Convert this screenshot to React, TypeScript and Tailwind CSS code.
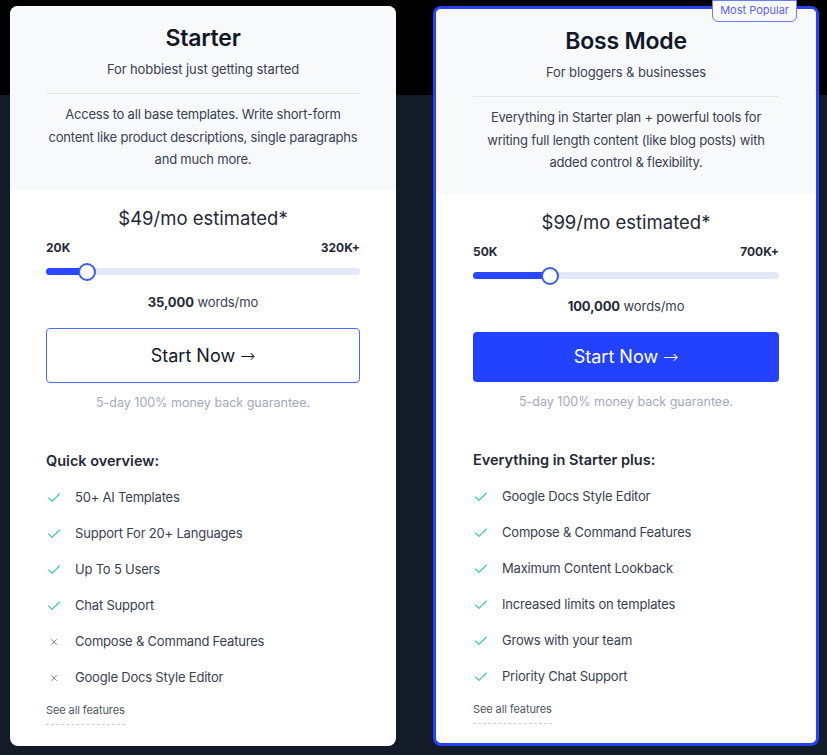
import { Check, X } from 'lucide-react';

interface Feature {
  label: string;
  included: boolean;
}

interface Plan {
  name: string;
  tagline: string;
  description: string;
  price: string;
  min: string;
  max: string;
  words: string;
  thumb: number;
  featuresTitle: string;
  features: Feature[];
  popular?: boolean;
}

const plans: Plan[] = [
  {
    name: 'Starter',
    tagline: 'For hobbiest just getting started',
    description:
      'Access to all base templates. Write short-form content like product descriptions, single paragraphs and much more.',
    price: '$49/mo estimated*',
    min: '20K',
    max: '320K+',
    words: '35,000',
    thumb: 41,
    featuresTitle: 'Quick overview:',
    features: [
      { label: '50+ AI Templates', included: true },
      { label: 'Support For 20+ Languages', included: true },
      { label: 'Up To 5 Users', included: true },
      { label: 'Chat Support', included: true },
      { label: 'Compose & Command Features', included: false },
      { label: 'Google Docs Style Editor', included: false },
    ],
  },
  {
    name: 'Boss Mode',
    tagline: 'For bloggers & businesses',
    description:
      'Everything in Starter plan + powerful tools for writing full length content (like blog posts) with added control & flexibility.',
    price: '$99/mo estimated*',
    min: '50K',
    max: '700K+',
    words: '100,000',
    thumb: 77,
    featuresTitle: 'Everything in Starter plus:',
    features: [
      { label: 'Google Docs Style Editor', included: true },
      { label: 'Compose & Command Features', included: true },
      { label: 'Maximum Content Lookback', included: true },
      { label: 'Increased limits on templates', included: true },
      { label: 'Grows with your team', included: true },
      { label: 'Priority Chat Support', included: true },
    ],
    popular: true,
  },
];

function WordSlider({ plan }: { plan: Plan }) {
  return (
    <div>
      <div className="flex justify-between text-[12px] leading-4 font-bold text-[#1f2937]">
        <span>{plan.min}</span>
        <span>{plan.max}</span>
      </div>
      <div className="relative h-[18px] mt-[7px] flex items-center">
        <div className="w-full h-[7px] rounded-full bg-[#e2e8f8]" />
        <div
          className="absolute left-0 h-[7px] rounded-full bg-[#2a48ff]"
          style={{ width: plan.thumb }}
        />
        <div
          className="absolute w-[18px] h-[18px] rounded-full bg-white border-2 border-[#3b5bff] -translate-x-1/2"
          style={{ left: plan.thumb }}
        />
      </div>
      <p className="mt-[11px] text-center text-[13px] leading-5 tracking-[-0.1px] text-[#374151]">
        <span className="font-bold text-[#1f2937]">{plan.words}</span> words/mo
      </p>
    </div>
  );
}

function PlanCard({ plan }: { plan: Plan }) {
  const popular = !!plan.popular;
  return (
    <div
      className={
        popular
          ? 'relative w-[386px] h-[740px] rounded-lg bg-white border-[3px] border-[#2642ff] flex flex-col'
          : 'relative w-[386px] h-[740px] rounded-lg bg-white flex flex-col'
      }
    >
      {popular && (
        <div className="absolute -top-[9px] right-[19px] px-[7px] h-[22px] flex items-end pb-[3px] rounded-b-md border border-[#6b7bff] bg-[#f8f9fb] text-[11px] leading-4 text-[#5f5ff0]">
          Most Popular
        </div>
      )}
      <div
        className={
          popular
            ? 'bg-[#f8f9fb] rounded-t-[5px] pt-[16px] pb-[20px] px-[37px] text-center'
            : 'bg-[#f8f9fb] rounded-t-lg pt-[16px] pb-[19px] px-[36px] text-center'
        }
      >
        <h2 className="text-[23px] leading-8 font-semibold tracking-[-0.2px] text-[#111827]">
          {plan.name}
        </h2>
        <p className="mt-[5px] text-[13px] leading-5 tracking-[-0.1px] text-[#374151]">
          {plan.tagline}
        </p>
        <div className="mt-[14px] h-px bg-[#e1e4ec]" />
        <p className="mt-[9px] text-[13px] leading-[22.5px] tracking-[-0.2px] text-[#374151]">
          {plan.description}
        </p>
      </div>
      <div className={popular ? 'px-[37px] pt-[14px]' : 'px-[36px] pt-[14px]'}>
        <p className="text-center text-[18.5px] leading-7 text-[#1f2937]">{plan.price}</p>
        <div className="mt-[8px]">
          <WordSlider plan={plan} />
        </div>
        <button
          className={
            popular
              ? 'mt-[16px] w-full h-[50px] rounded bg-[#2342ff] text-white text-[18px]'
              : 'mt-[16px] w-full h-[55px] rounded border border-[#4c6bff] bg-white text-[#111827] text-[18px]'
          }
        >
          Start Now <span className="font-['DejaVu_Sans'] font-light">→</span>
        </button>
        <p className="mt-[11px] text-center text-[12.5px] leading-[18px] text-[#a3aac0]">
          5-day 100% money back guarantee.
        </p>
        <h3 className="mt-[38px] text-[14.5px] leading-[22px] font-semibold text-[#1f2937]">
          {plan.featuresTitle}
        </h3>
        <ul className="mt-[16px] flex flex-col gap-4">
          {plan.features.map((f) => (
            <li
              key={f.label}
              className="flex items-center h-5 text-[13px] tracking-[-0.2px] text-[#374151]"
            >
              <span className="w-[29px] flex items-center">
                {f.included ? (
                  <Check className="w-[16px] h-[16px] text-[#34d399]" strokeWidth={1.75} />
                ) : (
                  <X className="w-[10px] h-[10px] ml-[3px] text-[#7c84a8]" strokeWidth={2.25} />
                )}
              </span>
              {f.label}
            </li>
          ))}
        </ul>
        <a className="mt-[14px] inline-block pb-[6px] border-b border-dashed border-[#c9cdd8] text-[11px] leading-4 tracking-[-0.1px] text-[#4b5563]">
          See all features
        </a>
      </div>
    </div>
  );
}

export default function App() {
  return (
    <div
      className="w-[827px] h-[755px] overflow-hidden bg-[linear-gradient(to_bottom,#000_95px,#131a28_95px)] pt-[6px] pl-[10px] flex gap-[37px] items-start"
      style={{ fontFamily: 'Inter, "Noto Sans", sans-serif' }}
    >
      {plans.map((p) => (
        <PlanCard key={p.name} plan={p} />
      ))}
    </div>
  );
}
